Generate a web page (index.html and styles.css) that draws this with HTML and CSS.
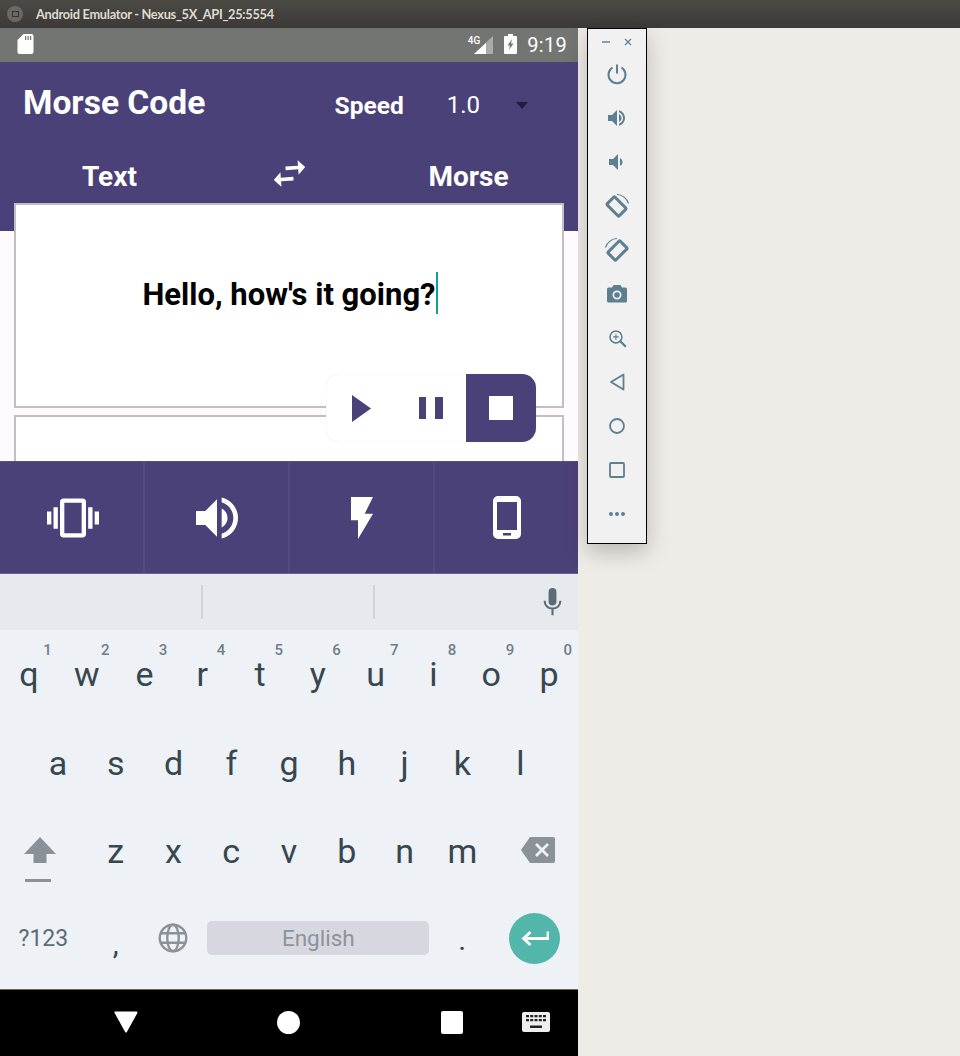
FILE: index.html
```html
<!DOCTYPE html>
<html lang="en">
<head>
<meta charset="utf-8">
<title>Android Emulator</title>
<link rel="stylesheet" href="styles.css">
</head>
<body>
<header class="titlebar">
  <span class="win-btn"><span class="win-btn-mark"></span></span>
  <span class="win-title">Android Emulator - Nexus_5X_API_25:5554</span>
</header>
<div class="workspace">
  <div class="phone">
    <div class="statusbar">
      <svg class="sd" viewBox="0 0 16 20"><path d="M6 0h8a2 2 0 0 1 2 2v16a2 2 0 0 1-2 2H2a2 2 0 0 1-2-2V6z" fill="#fff"/><path d="M7.500 2h1.200v4H7.500zM10 2h1.200v4H10zM12.500 2h1.200v4h-1.200z" fill="#737573"/></svg>
      <div class="status-right">
        <span class="net">4G</span>
        <svg class="signal" viewBox="0 0 19 18"><path d="M19 0v18H0z" fill="#aaaca9"/><path d="M12 7v11H0z" fill="#fff"/></svg>
        <svg class="battery" viewBox="0 0 13 20"><path d="M4 0h5v2h3a1 1 0 0 1 1 1v16a1 1 0 0 1-1 1H1a1 1 0 0 1-1-1V3a1 1 0 0 1 1-1h3z" fill="#fff"/><path d="M8 5 3.500 11.500H6L5 16l4.500-6.500H7z" fill="#737573"/></svg>
        <span class="clock">9:19</span>
      </div>
    </div>
    <main class="app">
      <div class="app-top">
        <h1 class="app-title">Morse Code</h1>
        <div class="speed">
          <span class="speed-label">Speed</span>
          <span class="speed-value">1.0</span>
          <span class="speed-caret"></span>
        </div>
      </div>
      <div class="tabs">
        <span class="tab">Text</span>
        <svg class="swap" viewBox="0 0 24 24"><path d="M6.990 11 3 15l3.990 4v-3H14v-2H6.990zM21 9l-3.990-4v3H10v2h7.010v3z" fill="#fff" transform="rotate(-4 12 12)"/></svg>
        <span class="tab">Morse</span>
      </div>
      <section class="card card-input">
        <p class="input-text">Hello, how's it going?<span class="caret"></span></p>
      </section>
      <section class="card card-output"></section>
      <div class="player">
        <span class="player-btn"><svg class="p-play" viewBox="0 0 19 27"><path d="M0 0 19 13.500 0 27z" fill="#4b4179"/></svg></span>
        <span class="player-btn"><svg class="p-pause" viewBox="0 0 24 22"><path d="M0 0h7v22H0zM16 0h8v22h-8z" fill="#4b4179"/></svg></span>
        <span class="player-btn player-stop"><span class="stop-square"></span></span>
      </div>
    </main>
    <nav class="modes">
      <span class="mode"><svg class="m-vib" viewBox="0 0 24 24"><path fill="#fff" d="M0 15h2V9H0zm3 2h2V7H3zm19-8v6h2V9zm-3 8h2V7h-2zM16.500 3h-9C6.670 3 6 3.670 6 4.500v15c0 .83.67 1.500 1.500 1.500h9c.83 0 1.500-.67 1.500-1.500v-15c0-.83-.67-1.500-1.500-1.500zM16 19H8V5h8z"/></svg></span>
      <span class="mode"><svg class="m-vol" viewBox="0 0 24 24"><path fill="#fff" d="M3 9v6h4l5 5V4L7 9zm13.500 3c0-1.770-1.020-3.290-2.500-4.030v8.050c1.480-.73 2.500-2.250 2.500-4.020zM14 3.230v2.060c2.890.86 5 3.540 5 6.710s-2.110 5.850-5 6.710v2.060c4.010-.91 7-4.490 7-8.770s-2.990-7.860-7-8.770z"/></svg></span>
      <span class="mode"><svg class="m-flash" viewBox="0 0 22 42"><path fill="#fff" d="M0 0h22l-8.300 16.700H22L7 42V23.300H0z"/></svg></span>
      <span class="mode"><svg class="m-phone" viewBox="0 0 28 43"><path fill="#fff" fill-rule="evenodd" d="M5 0h18a5 5 0 0 1 5 5v33a5 5 0 0 1-5 5H5a5 5 0 0 1-5-5V5a5 5 0 0 1 5-5zM4 6v28h20V6zM10 37v2.500h8V37z"/></svg></span>
    </nav>
    <div class="suggestions">
      <span class="sugg"></span>
      <span class="sugg sugg-div"></span>
      <span class="sugg sugg-div sugg-mic">
        <svg class="mic" viewBox="0 0 24 32"><path fill="#5c6c74" d="M12 0a4.500 4.500 0 0 1 4.500 4.500v11a4.500 4.500 0 0 1-9 0v-11A4.500 4.500 0 0 1 12 0z"/><path fill="none" stroke="#5c6c74" stroke-width="2.400" d="M3 14.500c0 5.500 4 9 9 9s9-3.500 9-9M12 23v8"/></svg>
      </span>
    </div>
    <div class="keyboard">
      <div class="row row-1">
        <span class="key"><sup class="hint">1</sup>q</span>
        <span class="key"><sup class="hint">2</sup>w</span>
        <span class="key"><sup class="hint">3</sup>e</span>
        <span class="key"><sup class="hint">4</sup>r</span>
        <span class="key"><sup class="hint">5</sup>t</span>
        <span class="key"><sup class="hint">6</sup>y</span>
        <span class="key"><sup class="hint">7</sup>u</span>
        <span class="key"><sup class="hint">8</sup>i</span>
        <span class="key"><sup class="hint">9</sup>o</span>
        <span class="key"><sup class="hint">0</sup>p</span>
      </div>
      <div class="row row-2">
        <span class="key">a</span><span class="key">s</span><span class="key">d</span><span class="key">f</span><span class="key">g</span><span class="key">h</span><span class="key">j</span><span class="key">k</span><span class="key">l</span>
      </div>
      <div class="row row-3">
        <span class="key">
          <svg class="shift" viewBox="0 0 34 45"><path fill="#8a9298" d="M17 0 33 17H23.500v9h-13v-9H1z"/><path fill="#8a9298" d="M2 42h26v3H2z"/></svg>
        </span>
        <span class="key">z</span><span class="key">x</span><span class="key">c</span><span class="key">v</span><span class="key">b</span><span class="key">n</span><span class="key">m</span>
        <span class="key">
          <svg class="del" viewBox="0 0 34 26"><path fill="#8a9298" d="M9 0h23a2 2 0 0 1 2 2v22a2 2 0 0 1-2 2H9L0 13z"/><path fill="none" stroke="#eef1f6" stroke-width="2.800" d="m15 7 12 12M27 7 15 19"/></svg>
        </span>
      </div>
      <div class="row row-4">
        <span class="key key-sym">?123</span>
        <span class="key key-comma">,</span>
        <span class="key key-low">
          <svg class="globe" viewBox="0 0 24 24"><g fill="none" stroke="#8a9298" stroke-width="1.900"><circle cx="12" cy="12" r="10.600"/><ellipse cx="12" cy="12" rx="4.600" ry="10.600"/><path d="M2 8.200h20M2 15.800h20"/></g></svg>
        </span>
        <span class="spacebar">English</span>
        <span class="key key-period">.</span>
        <span class="key key-low key-enter">
          <span class="enter-disc">
            <svg class="enter" viewBox="0 0 28 17"><path fill="none" stroke="#fff" stroke-width="2.800" d="M27 1.500v7H3M9.500 2 2.500 8.500l7 6.500"/></svg>
          </span>
        </span>
      </div>
    </div>
    <div class="navbar">
      <svg class="nav-back" viewBox="0 0 24 22"><path fill="#fff" stroke="#fff" stroke-width="2" stroke-linejoin="round" d="M1.500 1.500h21L12 20.500z"/></svg>
      <span class="nav-home"></span>
      <span class="nav-recent"></span>
      <svg class="nav-kbd" viewBox="0 0 28 20"><path fill="#eee" d="M2 0h24a2 2 0 0 1 2 2v16a2 2 0 0 1-2 2H2a2 2 0 0 1-2-2V2a2 2 0 0 1 2-2z"/><path fill="#222" d="M4 3h3v2.200H4zM8.200 3h3v2.200h-3zM12.500 3h3v2.200h-3zM16.800 3h3v2.200h-3zM21 3h3v2.200h-3zM4 7h3v2.200H4zM8.200 7h3v2.200h-3zM12.500 7h3v2.200h-3zM16.800 7h3v2.200h-3zM21 7h3v2.200h-3zM8 13.500h12V16H8z"/></svg>
    </div>
  </div>
  <aside class="toolwin">
    <div class="tool-head">
      <span class="tool-min"></span>
      <svg class="tool-close" viewBox="0 0 8 8"><path fill="none" stroke="#5e7f8f" stroke-width="1.200" d="m1 1 6 6M7 1 1 7"/></svg>
    </div>
    <span class="tool"><svg class="t-icon" viewBox="0 0 24 24"><path fill="none" stroke="#5e7f8f" stroke-width="2" d="M12 2.500v9M7.500 5.500a8.500 8.500 0 1 0 9 0"/></svg></span>
    <span class="tool"><svg class="t-icon" viewBox="0 0 24 24"><path fill="#5e7f8f" d="M3 9v6h4l5 5V4L7 9zm13.500 3c0-1.770-1.020-3.290-2.500-4.030v8.050c1.480-.73 2.500-2.250 2.500-4.020zM14 4.230v2.060c2.500.86 4 3.040 4 5.710s-1.500 4.850-4 5.710v2.060c3.500-.91 6-4.090 6-7.770s-2.500-6.860-6-7.770z"/></svg></span>
    <span class="tool"><svg class="t-icon" viewBox="0 0 24 24"><path fill="#5e7f8f" d="M4 9v6h4l5 5V4L8 9zm13.500 3c0-1.770-1.020-3.290-2.500-4.030v8.050c1.480-.73 2.500-2.250 2.500-4.020z"/></svg></span>
    <span class="tool"><svg class="t-large" viewBox="0 0 26 26"><g fill="none" stroke="#5e7f8f"><rect x="4" y="8" width="17" height="11" rx="1" stroke-width="3" transform="rotate(45 12.500 13.500)"/><path stroke-width="1.200" d="M13 1.500c5 0 10 4 11.500 9"/></g></svg></span>
    <span class="tool"><svg class="t-large" viewBox="0 0 26 26"><g fill="none" stroke="#5e7f8f"><rect x="5" y="8" width="17" height="11" rx="1" stroke-width="3" transform="rotate(-45 13.500 13.500)"/><path stroke-width="1.200" d="M13 1.500c-5 0-10 4-11.500 9"/></g></svg></span>
    <span class="tool"><svg class="t-icon" viewBox="0 0 24 24"><path fill="#5e7f8f" fill-rule="evenodd" d="M8.500 3h7L17 5.500h3.500a1.500 1.500 0 0 1 1.500 1.500v12a1.500 1.500 0 0 1-1.500 1.500h-17A1.500 1.500 0 0 1 2 19V7a1.500 1.500 0 0 1 1.500-1.500H7zM12 8.500a4.500 4.500 0 1 0 0 9 4.500 4.500 0 0 0 0-9z"/><circle cx="12" cy="13" r="2.800" fill="#5e7f8f"/></svg></span>
    <span class="tool"><svg class="t-zoom" viewBox="0 0 24 24"><g fill="none" stroke="#5e7f8f"><circle cx="10" cy="10" r="7.500" stroke-width="2"/><path stroke-width="2.800" d="m15 15 7.500 7.500"/><path stroke-width="1.500" d="M6.500 10h7M10 6.500v7"/></g></svg></span>
    <span class="tool"><svg class="t-icon" viewBox="0 0 24 24"><path fill="none" stroke="#5e7f8f" stroke-width="1.800" stroke-linejoin="round" d="M18.500 4.500v15L6 12z"/></svg></span>
    <span class="tool"><svg class="t-icon" viewBox="0 0 24 24"><circle cx="12" cy="12" r="7" fill="none" stroke="#5e7f8f" stroke-width="1.800"/></svg></span>
    <span class="tool"><svg class="t-icon" viewBox="0 0 24 24"><rect x="5" y="5" width="14" height="14" rx="1" fill="none" stroke="#5e7f8f" stroke-width="1.800"/></svg></span>
    <span class="tool"><svg class="t-icon" viewBox="0 0 24 24"><path fill="#5e7f8f" d="M6 10a2 2 0 1 0 0 4 2 2 0 0 0 0-4zm6 0a2 2 0 1 0 0 4 2 2 0 0 0 0-4zm6 0a2 2 0 1 0 0 4 2 2 0 0 0 0-4z"/></svg></span>
  </aside>
</div>
```

FILE: styles.css
```css
* { box-sizing: border-box; }
html, body { margin: 0; height: 100%; }
body {
  width: 960px;
  height: 1056px;
  overflow: hidden;
  background: #efebe6;
  font-family: Roboto, "Noto Sans", sans-serif;
  display: flex;
  flex-direction: column;
}
svg { display: block; flex: none; }

/* window title bar */
.titlebar {
  height: 28px;
  flex: none;
  display: flex;
  align-items: center;
  padding-left: 7px;
  background: linear-gradient(#4b4a45, #3b3a36);
}
.win-btn {
  width: 16px;
  height: 16px;
  border-radius: 50%;
  background: #6a6964;
  display: flex;
  align-items: center;
  justify-content: center;
}
.win-btn-mark { width: 7px; height: 6px; border: 1px solid #33322f; }
.win-title {
  margin-left: 13px;
  font: 700 12.800px Lato, sans-serif;
  letter-spacing: -.3px;
  color: #dfdbd2;
  white-space: nowrap;
}

.workspace { display: flex; align-items: flex-start; flex: 1; min-height: 0; }
.phone { width: 578px; height: 1028px; display: flex; flex-direction: column; overflow: hidden; }

/* status bar */
.statusbar {
  height: 34px;
  flex: none;
  background: #737573;
  display: flex;
  align-items: center;
  justify-content: space-between;
  padding: 0 11px 2px 17px;
}
.sd { width: 17px; height: 20px; }
.status-right { display: flex; align-items: center; }
.net { font-size: 10px; font-weight: 500; color: #fff; margin-top: -8px; margin-right: -6px; }
.signal { width: 19px; height: 18px; margin-top: 2px; }
.battery { width: 13px; height: 20px; margin-left: 11px; }
.clock { font-size: 20px; color: #fff; margin: 2px 0 0 10px; letter-spacing: .3px; }

/* app */
.app {
  height: 399px;
  flex: none;
  position: relative;
  overflow: hidden;
  background: linear-gradient(#4b4179 169px, #fefafe 169px);
}
.app-top {
  height: 80px;
  display: flex;
  align-items: center;
  justify-content: space-between;
  padding: 0 50px 0 23px;
}
.app-title { margin: 0; font-size: 33.600px; font-weight: 700; color: #fff; white-space: nowrap; }
.speed { display: flex; align-items: center; margin-top: 6px; }
.speed-label { font-size: 24.500px; font-weight: 700; color: #fff; }
.speed-value { font-size: 24px; color: #fff; margin-left: 43px; }
.speed-caret {
  margin-left: 36px;
  border-left: 6.500px solid transparent;
  border-right: 6.500px solid transparent;
  border-top: 7px solid #221d3e;
}
.tabs {
  height: 61px;
  padding-top: 2px;
  display: grid;
  grid-template-columns: 219px 1fr 219px;
  align-items: center;
  justify-items: center;
}
.tab { font-size: 28px; font-weight: 700; color: #fff; margin-top: 6px; }
.swap { width: 43px; height: 43px; }

.card { margin: 0 14px; background: #fff; border: 2px solid #c2bec3; }
.card-input { height: 205px; display: flex; justify-content: center; padding: 67px 0 0 2px; }
.card-output { height: 120px; margin-top: 7px; }
.input-text { margin: 0; font-size: 31px; font-weight: 700; color: #000; line-height: 46px; white-space: nowrap; display: flex; align-items: flex-start; }
.caret { width: 2px; height: 42px; background: #12a093; }

.player {
  position: absolute;
  left: 326px;
  top: 312px;
  width: 210px;
  height: 68px;
  border-radius: 14px;
  background: #fff;
  box-shadow: 0 0 1px rgba(0,0,0,.18);
  display: grid;
  grid-template-columns: 70px 70px 70px;
  overflow: hidden;
}
.player-btn { display: flex; align-items: center; justify-content: center; }
.player-stop { background: #4b4179; }
.p-play { width: 19px; height: 27px; }
.p-pause { width: 24px; height: 22px; }
.stop-square { width: 24px; height: 24px; background: #fff; }

/* mode buttons */
.modes {
  height: 113px;
  flex: none;
  display: grid;
  grid-template-columns: 143px 145px 145px 1fr;
  background: #4b4179;
  border-top: 1px solid #5a5086;
  border-bottom: 1px solid #6a5f96;
}
.mode { display: flex; align-items: center; justify-content: center; border-left: 2px solid #544a82; }
.mode:first-child { border-left: 0; padding-left: 2px; }
.m-vib { width: 52px; height: 52px; }
.m-vol { width: 56px; height: 56px; }
.m-flash { width: 22px; height: 42px; }
.m-phone { width: 28px; height: 43px; }

/* suggestion strip */
.suggestions {
  height: 56px;
  flex: none;
  display: grid;
  grid-template-columns: 201px 172px 1fr;
  align-items: center;
  background: #e6e9ee;
}
.sugg { height: 34px; }
.sugg-div { border-left: 2px solid #d0d3d7; }
.sugg-mic { display: flex; align-items: center; justify-content: flex-end; padding-right: 15px; }
.mic { width: 21px; height: 28px; }

/* keyboard */
.keyboard { height: 359px; flex: none; background: #eef1f6; display: flex; flex-direction: column; color: #37474f; }
.row { display: grid; flex: none; }
.row-1 { grid-template-columns: repeat(10, 57.800px); height: 91px; }
.row-2 { grid-template-columns: repeat(9, 57.800px); padding-left: 29px; height: 87px; }
.row-3 { grid-template-columns: 86.700px repeat(7, 57.800px) 86.700px; height: 88px; }
.row-4 { grid-template-columns: 86.700px 57.800px 57.800px 231px 57.800px 1fr; height: 93px; align-items: start; }
.key {
  position: relative;
  display: flex;
  align-items: center;
  justify-content: center;
  font-size: 34px;
  height: 100%;
  padding-bottom: 3px;
}
.hint {
  position: absolute;
  top: 12px;
  right: 6px;
  font-size: 15px;
  font-weight: 500;
  line-height: 16px;
  color: #6f7f87;
}
.shift { width: 34px; height: 45px; margin-left: -6px; margin-top: 18px; }
.del { width: 34px; height: 26px; margin-left: 6px; margin-top: -1px; }
.key-sym { font-size: 23px; color: #5c6c74; height: 87px; }
.key-comma { font-size: 30px; height: 82px; margin-top: 8px; }
.key-low { height: 87px; }
.globe { width: 30px; height: 30px; }
.spacebar {
  margin: 25px 0 0 5px;
  width: 222px;
  height: 34px;
  background: #d7d8df;
  border-radius: 5px;
  font-size: 22.500px;
  color: #8c939a;
  display: flex;
  align-items: center;
  justify-content: center;
}
.key-period { font-size: 30px; height: 90px; }
.key-enter { justify-content: flex-start; }
.enter-disc {
  width: 51px;
  height: 51px;
  border-radius: 50%;
  background: #52b6aa;
  display: flex;
  align-items: center;
  justify-content: center;
  margin-left: 18px;
}
.enter { width: 28px; height: 17px; }

/* nav bar */
.navbar {
  height: 67px;
  flex: none;
  background: #000;
  border-top: 1px solid #666;
  display: grid;
  grid-template-columns: 138px 151px 163px 1fr;
  align-items: center;
  justify-items: end;
  padding: 0 28px 2px 0;
}
.nav-back { width: 24px; height: 22px; }
.nav-home { width: 23px; height: 23px; border-radius: 50%; background: #fff; margin-right: -11px; }
.nav-recent { width: 22px; height: 23px; background: #fff; border-radius: 2px; margin-right: -11px; }
.nav-kbd { width: 28px; height: 20px; }

/* emulator toolbar window */
.toolwin {
  width: 60px;
  height: 516px;
  margin-left: 9px;
  background: #f1f1f1;
  border: 1px solid #000;
  box-shadow: 0 8px 22px rgba(0,0,0,.22);
  display: flex;
  flex-direction: column;
  align-items: center;
}
.tool-head { height: 23px; width: 100%; display: flex; align-items: center; justify-content: center; gap: 14px; padding-top: 3px; flex: none; }
.tool-min { width: 8px; height: 1.500px; background: #86a0ac; }
.tool-close { width: 8px; height: 8px; }
.tool { height: 44px; width: 100%; display: flex; align-items: center; justify-content: center; flex: none; }
.t-icon { width: 24px; height: 24px; }
.t-large { width: 26px; height: 26px; }
.t-zoom { width: 19px; height: 19px; }
```
